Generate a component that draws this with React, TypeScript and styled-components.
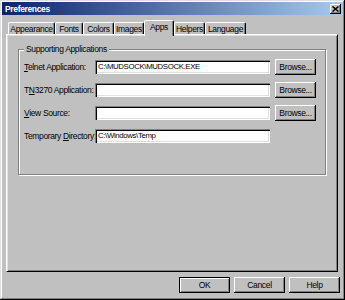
import React from "react";
import styled, { createGlobalStyle } from "styled-components";

const GlobalStyle = createGlobalStyle`
  html, body { margin: 0; padding: 0; background: #c0c0c0; }
  body { font-family: "Liberation Sans", Arial, sans-serif; font-size: 8.5px; letter-spacing: -0.35px; color: #000; }
  * { box-sizing: border-box; }
`;

const Window = styled.div`
  width: 345px;
  height: 300px;
  background: #c0c0c0;
  padding: 2px;
  display: flex;
  flex-direction: column;
  box-shadow: inset -1px -1px 0 #000, inset 1px 1px 0 #dfdfdf,
    inset -2px -2px 0 #808080, inset 2px 2px 0 #fff;
`;

const TitleBar = styled.div`
  height: 13px;
  flex: none;
  display: flex;
  align-items: center;
  justify-content: space-between;
  padding: 0 2px 0 3px;
  background: linear-gradient(to right, #0a246a, #a6caf0);
`;

const Title = styled.span`
  color: #fff;
  font-weight: bold;
  font-size: 8.5px;
  letter-spacing: -0.35px;
`;

const CloseButton = styled.div`
  width: 11px;
  height: 10px;
  background: #c0c0c0;
  display: flex;
  align-items: center;
  justify-content: center;
  box-shadow: inset -1px -1px 0 #000, inset 1px 1px 0 #fff, inset -2px -2px 0 #808080;
`;

const TabStrip = styled.div`
  height: 14px;
  flex: none;
  margin: 5px 0 0 6px;
  display: flex;
  align-items: flex-end;
  position: relative;
  z-index: 1;
`;

const Tab = styled.div<{ $active?: boolean; $w: number }>`
  width: ${(p) => p.$w}px;
  height: ${(p) => (p.$active ? 16 : 12)}px;
  margin-bottom: ${(p) => (p.$active ? -2 : 0)}px;
  padding-top: 1px;
  background: #c0c0c0;
  text-align: center;
  white-space: nowrap;
  line-height: 10px;
  border-top: 1px solid #fff;
  border-left: 1px solid #fff;
  border-right: 1px solid #000;
  border-radius: 2px 2px 0 0;
  box-shadow: inset -1px 0 0 #808080;
`;

const Panel = styled.div`
  height: 238px;
  flex: none;
  margin: 0 5px 0 4px;
  padding: 13px 10px 0 10px;
  border-top: 1px solid #fff;
  border-left: 1px solid #fff;
  border-right: 1px solid #000;
  border-bottom: 1px solid #000;
  box-shadow: inset 1px 1px 0 #dfdfdf, inset -1px -1px 0 #808080;
`;

const Group = styled.div`
  position: relative;
  height: 126px;
  margin: 1px;
  border: 1px solid #808080;
  box-shadow: 1px 1px 0 #fff, inset 1px 1px 0 #fff;
  padding: 9px 0 0 5px;
  display: flex;
  flex-direction: column;
  gap: 7px;
`;

const Legend = styled.span`
  position: absolute;
  top: -6px;
  left: 5px;
  padding: 0 2px;
  background: #c0c0c0;
  line-height: 10px;
`;

const Row = styled.div`
  height: 16px;
  display: flex;
  align-items: center;
`;

const Label = styled.label`
  width: 71px;
  flex: none;
  white-space: nowrap;
  u { text-decoration: underline; }
`;

const Field = styled.div`
  width: 175px;
  height: 14px;
  flex: none;
  background: #fff;
  padding: 1px 0 0 3px;
  line-height: 12px;
  font-size: 7.8px;
  white-space: nowrap;
  overflow: hidden;
  box-shadow: inset 1px 1px 0 #808080, inset 2px 2px 0 #000,
    inset -1px -1px 0 #fff, inset -2px -2px 0 #dfdfdf;
`;

const Button = styled.div<{ $w: number; $default?: boolean }>`
  width: ${(p) => p.$w}px;
  height: 16px;
  flex: none;
  display: flex;
  align-items: center;
  justify-content: center;
  background: #c0c0c0;
  box-shadow: ${(p) =>
    p.$default
      ? "inset 0 0 0 1px #000, inset 2px 2px 0 #fff, inset -2px -2px 0 #808080"
      : "inset -1px -1px 0 #000, inset 1px 1px 0 #fff, inset -2px -2px 0 #808080"};
`;

const BrowseButton = styled(Button)`
  margin-left: 5px;
`;

const Footer = styled.div`
  display: flex;
  justify-content: flex-end;
  gap: 4px;
  padding: 5px 3px 0 0;
`;

const tabs: [string, number][] = [
  ["Appearance", 47],
  ["Fonts", 28],
  ["Colors", 31],
  ["Images", 30],
  ["Apps", 30],
  ["Helpers", 31],
  ["Language", 41],
];

export default function App() {
  return (
    <>
      <GlobalStyle />
      <Window>
        <TitleBar>
          <Title>Preferences</Title>
          <CloseButton>
            <svg width="7" height="6" viewBox="0 0 7 6">
              <path d="M0.5 0.5 L6.5 5.5 M6.5 0.5 L0.5 5.5" stroke="#000" strokeWidth="1.5" />
            </svg>
          </CloseButton>
        </TitleBar>
        <TabStrip>
          {tabs.map(([t, w]) => (
            <Tab key={t} $w={w} $active={t === "Apps"}>
              {t}
            </Tab>
          ))}
        </TabStrip>
        <Panel>
          <Group>
            <Legend>Supporting Applications</Legend>
            <Row>
              <Label>
                <u>T</u>elnet Application:
              </Label>
              <Field>C:\MUDSOCK\MUDSOCK.EXE</Field>
              <BrowseButton $w={41}>Browse...</BrowseButton>
            </Row>
            <Row>
              <Label>
                T<u>N</u>3270 Application:
              </Label>
              <Field />
              <BrowseButton $w={41}>Browse...</BrowseButton>
            </Row>
            <Row>
              <Label>
                <u>V</u>iew Source:
              </Label>
              <Field />
              <BrowseButton $w={41}>Browse...</BrowseButton>
            </Row>
            <Row>
              <Label>
                Temporary <u>D</u>irectory:
              </Label>
              <Field>C:\Windows\Temp</Field>
            </Row>
          </Group>
        </Panel>
        <Footer>
          <Button $w={51} $default>OK</Button>
          <Button $w={51}>Cancel</Button>
          <Button $w={51}>Help</Button>
        </Footer>
      </Window>
    </>
  );
}
